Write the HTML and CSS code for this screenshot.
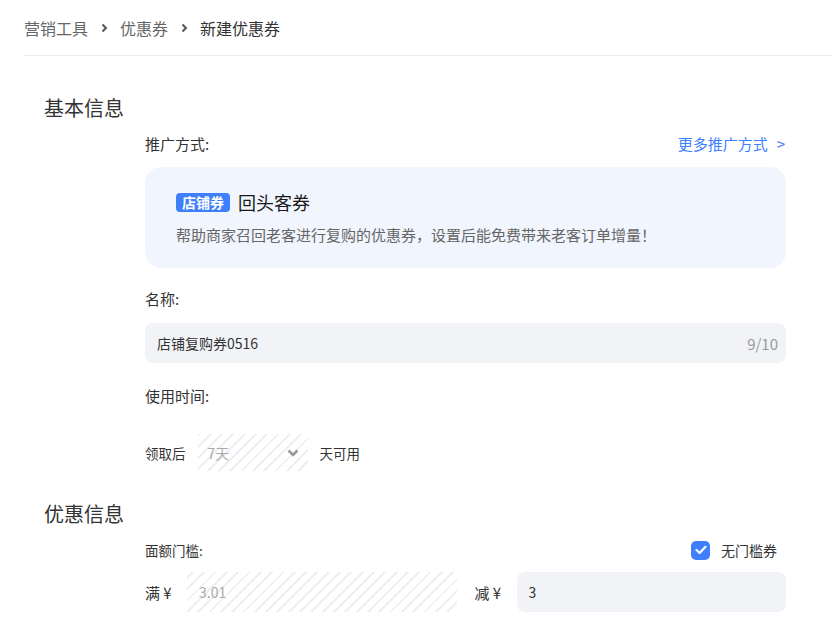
FILE: index.html
```html
<!DOCTYPE html>
<html lang="zh-CN">
<head>
    <meta charset="UTF-8">
    <title>新建优惠券</title>
    <link rel="stylesheet" href="styles.css">
</head>
<body>
    <div class="crumbs">
        <span class="crumbs__item">营销工具</span>
        <svg class="crumbs__sep" width="7" height="10" viewBox="0 0 7 10"><polyline points="1.5,1.5 5,5 1.5,8.5" fill="none" stroke="#555" stroke-width="2"/></svg>
        <span class="crumbs__item">优惠券</span>
        <svg class="crumbs__sep" width="7" height="10" viewBox="0 0 7 10"><polyline points="1.5,1.5 5,5 1.5,8.5" fill="none" stroke="#555" stroke-width="2"/></svg>
        <span class="crumbs__item current">新建优惠券</span>
    </div>

    <div class="section">
        <h3 class="section__title">基本信息</h3>
        <div class="form">
            <div class="field-head">
                <span class="label">推广方式:</span>
                <a class="more">更多推广方式<span class="more__arrow">&gt;</span></a>
            </div>
            <div class="promo">
                <div class="promo__top">
                    <span class="tag">店铺券</span>
                    <span class="promo__name">回头客券</span>
                </div>
                <div class="promo__desc">帮助商家召回老客进行复购的优惠券，设置后能免费带来老客订单增量！</div>
            </div>

            <div class="label label--name">名称:</div>
            <div class="input">
                <span>店铺复购券0516</span>
                <span class="count">9/10</span>
            </div>

            <div class="label label--time">使用时间:</div>
            <div class="inline-row">
                <span class="small">领取后</span>
                <div class="select">
                    <span>7天</span>
                    <svg width="12" height="8" viewBox="0 0 12 8"><polyline points="1.5,1.5 6,6 10.5,1.5" fill="none" stroke="#999" stroke-width="2.6"/></svg>
                </div>
                <span class="small">天可用</span>
            </div>
        </div>
    </div>

    <div class="section section--second">
        <h3 class="section__title">优惠信息</h3>
        <div class="form">
            <div class="field-head field-head--small">
                <span class="small">面额门槛:</span>
                <label class="check">
                    <span class="check__box">
                        <svg width="12" height="10" viewBox="0 0 12 10"><polyline points="1.5,5 4.6,8 10.5,1.8" fill="none" stroke="#fff" stroke-width="2.2" stroke-linecap="round" stroke-linejoin="round"/></svg>
                    </span>
                    <span class="check__text">无门槛券</span>
                </label>
            </div>
            <div class="amount-row">
                <span class="amount-label">满 ¥</span>
                <div class="input input--disabled">3.01</div>
                <span class="amount-label">减 ¥</span>
                <div class="input">3</div>
            </div>
        </div>
    </div>
</body>
</html>
```

FILE: styles.css
```css
body{
    margin: 0;
    font-family: "Noto Sans CJK SC", "Noto Sans", sans-serif;
    color: #333;
    background: #fff;
}
.crumbs{
    margin-left: 24px;
    height: 55px;
    border-bottom: 1px solid #ececef;
    display: flex;
    align-items: center;
    font-size: 16px;
    line-height: 22px;
}
.crumbs__item{
    color: #666;
}
.crumbs__item.current{
    color: #333;
}
.crumbs__sep{
    margin: 0 12px 0 13px;
}
.section{
    padding: 0 46px 0 44px;
}
.section__title{
    margin: 38px 0 0;
    font-size: 20px;
    line-height: 28px;
    font-weight: normal;
    color: #333;
}
.section--second .section__title{
    margin-top: 29px;
}
.form{
    margin-left: 101px;
}
.field-head{
    margin-top: 11px;
    display: flex;
    justify-content: space-between;
    align-items: center;
}
.label{
    font-size: 15px;
    line-height: 22px;
    color: #333;
}
.more{
    font-size: 15px;
    line-height: 22px;
    color: #3d7fff;
    cursor: pointer;
    margin-right: 1px;
}
.more__arrow{
    margin-left: 9px;
}
.promo{
    margin-top: 12px;
    background: #f1f5fe;
    border-radius: 16px;
    padding: 23px 31px 22px;
}
.promo__top{
    display: flex;
    align-items: center;
    height: 24px;
}
.tag{
    background: #3f7ffc;
    color: #fff;
    font-size: 14px;
    font-weight: bold;
    line-height: 19px;
    padding: 0 6px;
    border-radius: 4px;
}
.promo__name{
    margin-left: 8px;
    font-size: 18px;
    color: #1a1a1a;
}
.promo__desc{
    margin-top: 10px;
    font-size: 15px;
    line-height: 22px;
    color: #666;
}
.label--name{
    margin-top: 20px;
}
.input{
    margin-top: 13px;
    height: 40px;
    box-sizing: border-box;
    background: #f2f3f6;
    border-radius: 8px;
    padding: 0 8px 0 12px;
    display: flex;
    align-items: center;
    justify-content: space-between;
    font-size: 14px;
    color: #333;
}
.count{
    font-size: 15px;
    color: #999;
}
.label--time{
    margin-top: 22px;
}
.inline-row{
    margin-top: 27px;
    display: flex;
    align-items: center;
}
.small{
    font-size: 13.5px;
    color: #333;
}
.select{
    width: 110px;
    height: 37px;
    margin: 0 12px;
    box-sizing: border-box;
    padding: 0 9px 0 10px;
    display: flex;
    align-items: center;
    justify-content: space-between;
    font-size: 14px;
    color: #aaa;
    background: repeating-linear-gradient(-45deg, #fff 0 6px, #eeeff3 6px 8px);
}
.field-head--small{
    margin-top: 12px;
}
.check{
    display: flex;
    align-items: center;
    margin-right: 9px;
}
.check__box{
    width: 19px;
    height: 19px;
    border-radius: 5px;
    background: #3f7ffc;
    display: flex;
    align-items: center;
    justify-content: center;
    margin-right: 11px;
}
.check__text{
    font-size: 14px;
    color: #333;
}
.amount-row{
    margin-top: 12px;
    display: flex;
    align-items: center;
}
.amount-row .input{
    margin-top: 0;
    flex: 1;
    font-size: 14px;
    justify-content: flex-start;
}
.amount-label{
    font-size: 15px;
    color: #333;
    width: 42px;
}
.amount-row .input--disabled{
    margin-right: 18px;
    border-radius: 0;
    color: #aaa;
    background: repeating-linear-gradient(-45deg, #fff 0 6px, #eeeff3 6px 8px);
}
```
